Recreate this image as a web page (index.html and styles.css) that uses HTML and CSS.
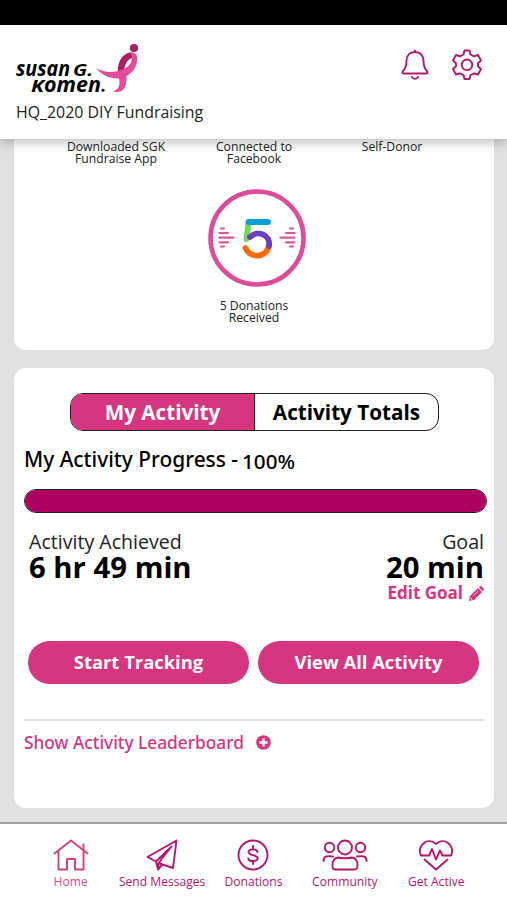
FILE: index.html
```html
<!DOCTYPE html>
<html lang="en">
<head>
    <meta charset="UTF-8">
    <meta name="viewport" content="width=device-width, initial-scale=1.0">
    <title>Susan G. Komen - HQ_2020 DIY Fundraising</title>
    <link rel="stylesheet" href="styles.css">
</head>
<body>
    <div class="status-bar"></div>

    <header class="header">
        <div class="brand">
            <svg class="logo" width="124" height="54" viewBox="0 0 124 54">
                <text class="logo-text" x="0" y="35" textLength="54" lengthAdjust="spacingAndGlyphs">susan</text>
                <text class="logo-text cap" x="57" y="35" textLength="20" lengthAdjust="spacingAndGlyphs">G.</text>
                <text class="logo-text cap" x="15" y="50.500" textLength="13" lengthAdjust="spacingAndGlyphs">K</text>
                <text class="logo-text" x="28" y="50.500" textLength="57" lengthAdjust="spacingAndGlyphs">omen</text>
                <circle cx="87" cy="49.300" r="1.500"/>
                <circle cx="118" cy="7" r="4.100" fill="#ad1d61"/>
                <path fill="#ad1d61" d="M118 12.500C110 9 101 18 102 31L108 33C108 24 111 17 118 17Z"/>
                <path fill="#e64a9d" d="M113 11.500C119 10 122 14 121 20C120 27 117 31 110.500 35C111 43 109 51 101 51C99 51 97 50.500 97 50.500C104 48 104 43 103 37.500C94 38 86 34 80 27C87 31 95 32 102 30C111 28 116 23 116 17C116 14 115 12.500 113 11.500Z"/>
            </svg>
            <div class="campaign">HQ_2020 DIY Fundraising</div>
        </div>
        <div class="header-icons">
            <svg width="28" height="32" viewBox="0 0 28 32">
                <path d="M14 1.500V3M14 3C8.500 3 5.500 7 5.500 12C5.500 17 4.500 19.500 2 22.200C1 23.500 1.500 24.500 2.500 24.500H25.500C26.500 24.500 27 23.500 26 22.200C23.500 19.500 22.500 17 22.500 12C22.500 7 19.500 3 14 3ZM11 28C12 30.500 16 30.500 17 28"/>
            </svg>
            <svg width="32" height="32" viewBox="0 0 32 32">
                <path d="M13.500 1.500H18.500L19.500 5.500L23 7.300L27 6L30 11.500L27 14.300V17.300L30 20L27 25.500L23 24.300L19.500 26L18.500 30H13.500L12.500 26L9 24.300L5 25.500L2 20L5 17.300V14.300L2 11.500L5 6L9 7.300L12.500 5.500Z"/>
                <circle cx="16" cy="15.800" r="5.300"/>
            </svg>
        </div>
    </header>

    <main class="content">
        <section class="card badges">
            <div class="badge-row">
                <div class="badge-label">Downloaded SGK<br>Fundraise App</div>
                <div class="badge-label">Connected to<br>Facebook</div>
                <div class="badge-label">Self-Donor</div>
            </div>
            <svg class="badge" width="98" height="98" viewBox="0 0 98 98">
                <circle cx="49" cy="49" r="46.500" stroke="#de4b99" stroke-width="4.600"/>
                <g stroke="#e0559f" stroke-width="2.200">
                    <path d="M13 39.500H16M11.500 44H20M11.500 48.700H25.500M11.500 53.300H20M13 57.500H16"/>
                    <path d="M82 39.500H85M78 44H86.500M72.500 48.700H86.500M78 53.300H86.500M82 57.500H85"/>
                </g>
                <g stroke-width="5.800">
                    <path stroke="#72d657" d="M40.500 34L38.500 50"/>
                    <path stroke="#0b9fd8" d="M40.500 33H60"/>
                    <path stroke="#ff6b0a" d="M37.500 59C42 70 60 69.500 61 55"/>
                    <path stroke="#6a3fc0" d="M42 48C50 40.500 63 46 61 57"/>
                </g>
            </svg>
            <div class="badge-label">5 Donations<br>Received</div>
        </section>

        <section class="card activity">
            <div class="tabs">
                <div class="tab active">My Activity</div>
                <div class="tab">Activity Totals</div>
            </div>
            <div class="progress-title">
                <span class="progress-name">My Activity Progress -</span>
                <span class="percent">100%</span>
            </div>
            <div class="progress"><div class="progress-fill" style="width: 100%"></div></div>
            <div class="stats">
                <div>
                    <div class="stat-label">Activity Achieved</div>
                    <div class="stat-value">6 hr 49 min</div>
                </div>
                <div class="goal">
                    <div class="stat-label">Goal</div>
                    <div class="stat-value">20 min</div>
                    <a class="edit" href="#">Edit Goal
                        <svg width="15" height="15" viewBox="0 0 15 15">
                            <path d="M0 15L1 10L9 2L13 6L5 14Z"/>
                            <path d="M9.800 1.200L10.800 .4C11.500 0 12.200 0 12.700 .5L14.500 2.300C15 3 15 3.700 14.500 4.300L13.700 5.200Z"/>
                            <path fill="none" stroke="#fff" stroke-width=".7" d="M4.500 9.500L9 5"/>
                            <path fill="#fff" d="M1.800 11.500L3.500 13.200L1.500 13.500Z"/>
                        </svg>
                    </a>
                </div>
            </div>
            <div class="actions">
                <button class="button">Start Tracking</button>
                <button class="button">View All Activity</button>
            </div>
            <a class="leaderboard" href="#">
                <span>Show Activity Leaderboard</span>
                <svg width="15" height="15" viewBox="0 0 15 15">
                    <circle cx="7.500" cy="7.500" r="7.300"/>
                    <path stroke="#fff" stroke-width="2.300" d="M7.500 3.500V11.500M3.500 7.500H11.500"/>
                </svg>
            </a>
        </section>
    </main>

    <nav class="nav">
        <a class="nav-item current" href="#">
            <svg width="36" height="32" viewBox="0 0 36 32">
                <path d="M1.500 14.500L18 1.500L34.500 14.500M5.500 12V30.500H14V20H22V30.500H30.500V12M30.500 11V5.500"/>
            </svg>
            <span>Home</span>
        </a>
        <a class="nav-item" href="#">
            <svg width="32" height="32" viewBox="0 0 32 32">
                <path d="M30.500 1.500L1.500 18L10 22.500L12 30.500L16.500 25.500L27 29ZM10 22.500L25.500 7.500L12.500 24V30M12.500 24L16.500 25.500"/>
            </svg>
            <span>Send Messages</span>
        </a>
        <a class="nav-item" href="#">
            <svg width="32" height="32" viewBox="0 0 32 32">
                <circle cx="16" cy="16" r="14.500"/>
                <path d="M16 7V10.500M16 22V25M20.500 13C20 9.500 11.500 9.500 11.500 13C11.500 17 20.700 15.500 20.700 19C20.700 23 11.800 23 11.300 19.500"/>
            </svg>
            <span>Donations</span>
        </a>
        <a class="nav-item" href="#">
            <svg width="46" height="32" viewBox="0 0 46 32">
                <circle cx="23" cy="8.500" r="7"/>
                <circle cx="7.500" cy="8.500" r="4.700"/>
                <circle cx="38.500" cy="8.500" r="4.700"/>
                <path d="M16 18.500C19 19.500 27 19.500 30 18.500C34 19 35.500 22 35.500 26.500C35.500 29.500 35 30.500 32 30.500H14C11 30.500 10.500 29.500 10.500 26.500C10.500 22 12 19 16 18.500ZM1.500 22C1.500 17.500 4 16.500 11 17.500M44.500 22C44.500 17.500 42 16.500 35 17.500"/>
            </svg>
            <span>Community</span>
        </a>
        <a class="nav-item" href="#">
            <svg width="36" height="32" viewBox="0 0 36 32">
                <path d="M3 16.500H11L14 10L18 20.500L22 11.500L24.500 16.500H33C38 7 26 -3 18 5C10 -3 -2 7 3 16.500M6.500 20.500L18 30.500L29.500 20.500"/>
            </svg>
            <span>Get Active</span>
        </a>
    </nav>
</body>
</html>
```

FILE: styles.css
```css
*{
    box-sizing: border-box;
}
body{
    margin: 0;
    height: 900px;
    overflow: hidden;
    display: flex;
    flex-direction: column;
    font-family: "Open Sans", "Noto Sans", sans-serif;
    color: #000;
    background-color: #e1e1e1;
}
svg{
    display: block;
    flex: none;
    overflow: visible;
}
a{
    text-decoration: none;
    color: #d6367f;
}
.status-bar{
    height: 25px;
    background-color: #000;
}
.header{
    height: 114px;
    padding: 16px 24px 0 16px;
    display: flex;
    justify-content: space-between;
    background-color: #fff;
    box-shadow: 0 2px 12px rgba(0, 0, 0, 0.3);
    z-index: 1;
}
.logo-text{
    font-size: 22px;
    font-style: italic;
    font-weight: 700;
}
.logo-text.cap{
    font-size: 16.5px;
    font-weight: 700;
}
.campaign{
    margin-top: 6px;
    font-size: 15.9px;
    line-height: 22px;
    color: #222;
}
.header-icons{
    display: flex;
    gap: 22px;
    padding-top: 8px;
}
.header-icons svg, .nav svg{
    fill: none;
    stroke: #b5176d;
    stroke-width: 1.9;
    stroke-linejoin: round;
    stroke-linecap: round;
}
.content{
    flex: 1;
    padding: 0 13px 0 14px;
}
.card{
    background-color: #fff;
    border-radius: 12px;
}
.badges{
    height: 211px;
    border-radius: 0 0 12px 12px;
    display: flex;
    flex-direction: column;
    align-items: center;
    padding-top: 2px;
}
.badge-row{
    display: grid;
    grid-template-columns: repeat(3, 138px);
    height: 48px;
}
.badge-label{
    text-align: center;
    font-size: 12.2px;
    line-height: 12.4px;
    color: #222;
}
.badge{
    fill: none;
    stroke-linecap: round;
    margin: 0 0 13px 5px;
}
.activity{
    margin-top: 18px;
    height: 440px;
    padding: 25px 7px 0 10px;
}
.tabs{
    display: flex;
    width: 369px;
    height: 38px;
    margin-left: 46px;
    border: 1px solid #222;
    border-radius: 13px;
    overflow: hidden;
}
.tab{
    flex: 1;
    text-align: center;
    font-size: 20.7px;
    font-weight: 700;
    line-height: 37px;
}
.tab.active{
    color: #fff;
    background-color: #d6367f;
    border-right: 1px solid #222;
}
.progress-title{
    display: flex;
    gap: 4px;
    height: 58px;
    padding-top: 14px;
    font-family: "Noto Sans", "Open Sans", sans-serif;
    font-size: 20.9px;
    font-weight: 500;
    line-height: 28px;
}
.percent{
    padding-top: 2px;
    font-size: 20.6px;
}
.progress{
    height: 24px;
    border: 1px solid #222;
    border-radius: 12px;
    overflow: hidden;
}
.progress-fill{
    height: 100%;
    background-color: #ad005f;
}
.stats{
    display: flex;
    justify-content: space-between;
    height: 128px;
    padding: 16px 3px 0 5px;
}
.stat-label{
    font-size: 19.6px;
    line-height: 25px;
    color: #222;
}
.stat-value{
    font-size: 29.3px;
    font-weight: 700;
    line-height: 26px;
}
.goal{
    text-align: right;
}
.edit{
    display: flex;
    justify-content: flex-end;
    align-items: center;
    gap: 6px;
    font-size: 17px;
    font-weight: 700;
    line-height: 26px;
}
.edit svg, .leaderboard svg{
    fill: #d6367f;
}
.actions{
    display: flex;
    gap: 9px;
    padding-left: 4px;
}
.button{
    width: 221px;
    height: 43px;
    padding: 0 0 3px;
    border: none;
    border-radius: 22px;
    background-color: #d6367f;
    color: #fff;
    font-family: inherit;
    font-size: 18.4px;
    font-weight: 700;
}
.leaderboard{
    display: flex;
    align-items: center;
    gap: 12px;
    margin: 35px 3px 0 0;
    padding-top: 9px;
    border-top: 2px solid #e0e0e0;
    font-family: "Noto Sans", "Open Sans", sans-serif;
    font-size: 17.3px;
    font-weight: 500;
    line-height: 25px;
}
.nav{
    display: grid;
    grid-template-columns: repeat(5, 91.4px);
    justify-content: center;
    height: 78px;
    padding-top: 15px;
    border-top: 2px solid #a0a0a0;
    background-color: #fff;
}
.nav-item{
    display: flex;
    flex-direction: column;
    align-items: center;
    gap: 2px;
    font-size: 12.1px;
    line-height: 18px;
    white-space: nowrap;
    color: #b5176d;
}
.nav-item.current{
    color: #d94f8d;
}
.nav-item.current svg{
    stroke: #d94078;
}
```
